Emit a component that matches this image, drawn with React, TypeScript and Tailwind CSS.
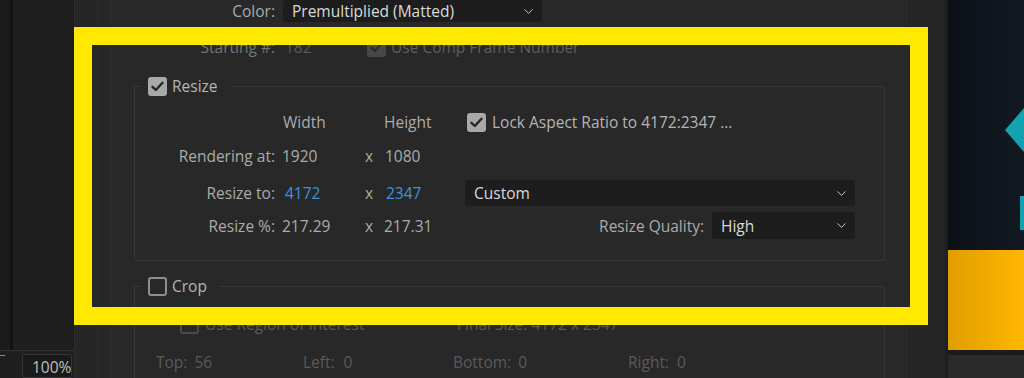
import { ChevronDown } from "lucide-react";

const FONT = { fontFamily: '"Open Sans", "Noto Sans", sans-serif' };

function Check({ on = false, dim = false }: { on?: boolean; dim?: boolean }) {
  if (!on) {
    return (
      <span
        className={`block size-[19px] shrink-0 rounded-[3px] border-2 ${dim ? "border-[#4a4a4a]" : "border-[#8e8e8e]"}`}
      />
    );
  }
  return (
    <span
      className={`flex size-[19px] shrink-0 items-center justify-center rounded-[3px] ${dim ? "bg-[#474747]" : "bg-[#a8a8a8]"}`}
    >
      <svg width="13" height="11" viewBox="0 0 13 11" fill="none">
        <path
          d="M1.5 5.8 4.8 9 11.5 1.8"
          stroke={dim ? "#2c2c2c" : "#262626"}
          strokeWidth="2.4"
          strokeLinecap="round"
          strokeLinejoin="round"
        />
      </svg>
    </span>
  );
}

function Select({ value, className }: { value: string; className: string }) {
  return (
    <div
      className={`flex items-center justify-between rounded-[3px] bg-[#1d1d1d] pl-[9px] pr-[6px] text-[#dadada] ${className}`}
    >
      <span>{value}</span>
      <ChevronDown size={15} strokeWidth={1.6} className="text-[#c4c4c4]" />
    </div>
  );
}

export default function App() {
  return (
    <div
      className="relative flex h-[378px] w-[1024px] overflow-hidden bg-[#262626] text-[15.5px] leading-5 text-[#ababab]"
      style={FONT}
    >
      {/* app side panel */}
      <div className="flex w-[74px] shrink-0 flex-col bg-[#1f1f1f]">
        <div className="flex h-[357px]">
          <div className="w-[10px] bg-[#1b1b1b]" />
          <div className="w-[3px] bg-[#131313]" />
          <div className="flex-1 border-r border-[#181818]" />
        </div>
        <div className="h-px bg-[#333]" />
        <div className="flex flex-1 items-start">
          <div className="mt-[4px] h-px w-[5px] bg-[#8a8a8a]" />
          <div className="ml-[17px] mt-[3px] w-[50px] rounded-[2px] border border-[#353535] bg-[#1a1a1a] pl-[9px] pt-[2px] text-[#bfbfbf]">
            100%
          </div>
        </div>
      </div>

      {/* export dialog */}
      <div className="flex w-[854px] shrink-0 bg-[#262626]">
        <div className="w-[23px] border-l border-[#2e2e2e]" />
        <div className="w-[13px] border-l border-[#2d2d2d] bg-[#272727]" />
        <div className="w-[797px] border-x border-[#2d2d2d] bg-[#282828]">
          <div className="flex h-[22px] items-center">
            <span className="ml-[24px] w-[140px] text-right">Color:</span>
            <Select value="Premultiplied (Matted)" className="ml-[8px] h-[22px] w-[259px]" />
          </div>

          <div className="mt-[14px] flex h-[22px] items-center text-[#767676]">
            <span className="ml-[24px] w-[140px] text-right">Starting #:</span>
            <span className="w-[92px] pl-[10px] text-[#595959]">182</span>
            <Check on dim />
            <span className="ml-[5px] text-[#5e5e5e]">Use Comp Frame Number</span>
          </div>

          {/* Resize */}
          <fieldset className="ml-[23px] mt-[18px] w-[751px] border border-[#353535] pb-[21px]">
            <legend className="ml-[6px] flex items-center pl-[7px] pr-[12px]">
              <Check on />
              <span className="ml-[5px] text-[#b5b5b5]">Resize</span>
            </legend>

            <div className="mt-[16px] flex h-[20px] items-center">
              <span className="w-[140px]" />
              <span className="w-[90px] pl-[8px]">Width</span>
              <span className="w-[19px]" />
              <span className="w-[81px]">Height</span>
              <span className="flex items-center pl-[2px]">
                <Check on />
                <span className="ml-[6px] text-[#b5b5b5]">Lock Aspect Ratio to 4172:2347 ...</span>
              </span>
            </div>

            <div className="mt-[14px] flex h-[20px] items-center">
              <span className="w-[140px] text-right">Rendering at:</span>
              <span className="w-[90px] pl-[7px]">1920</span>
              <span className="w-[19px]">x</span>
              <span className="w-[81px] pl-px">1080</span>
            </div>

            <div className="mt-[14px] flex h-[26px] items-center">
              <span className="w-[140px] text-right">Resize to:</span>
              <span className="w-[90px] pl-[10px] text-[#3d93de]">4172</span>
              <span className="w-[19px]">x</span>
              <span className="w-[81px] pl-[2px] text-[#3d93de]">2347</span>
              <Select value="Custom" className="h-[26px] w-[390px]" />
            </div>

            <div className="mt-[6px] flex h-[27px] items-center">
              <span className="w-[140px] text-right">Resize %:</span>
              <span className="w-[90px] pl-[7px]">217.29</span>
              <span className="w-[19px]">x</span>
              <span className="w-[81px]">217.31</span>
              <span className="flex w-[390px] items-center justify-end gap-[8px]">
                <span>Resize Quality:</span>
                <Select value="High" className="h-[27px] w-[143px]" />
              </span>
            </div>
          </fieldset>

          {/* Crop */}
          <fieldset className="ml-[23px] mt-[15px] w-[751px] border border-[#353535] pb-[10px]">
            <legend className="ml-[6px] flex items-center pl-[7px] pr-[12px]">
              <Check />
              <span className="ml-[5px] text-[#b5b5b5]">Crop</span>
            </legend>

            <div className="mt-[18px] flex h-[20px] items-center text-[#5a5a5a]">
              <span className="ml-[45px]">
                <Check dim />
              </span>
              <span className="ml-[6px] w-[252px]">Use Region of Interest</span>
              <span>Final Size: 4172 x 2347</span>
            </div>

            <div className="mt-[18px] flex h-[20px] items-center text-[#5a5a5a]">
              <span className="ml-[21px] w-[147px]">
                Top:<span className="ml-[7px]">56</span>
              </span>
              <span className="w-[150px]">
                Left:<span className="ml-[9px]">0</span>
              </span>
              <span className="w-[175px]">
                Bottom:<span className="ml-[7px]">0</span>
              </span>
              <span>
                Right:<span className="ml-[8px]">0</span>
              </span>
            </div>
          </fieldset>
        </div>
        <div className="flex-1 bg-[#262626]" />
      </div>

      {/* gap to program monitor */}
      <div className="w-[20px] shrink-0 border-r-[3px] border-[#1e1e1e] bg-[#252525]" />

      {/* program monitor preview */}
      <div className="flex w-[76px] shrink-0 flex-col">
        <div className="h-[250px] bg-gradient-to-r from-[#0c1017] to-[#131922]">
          <svg width="76" height="250" viewBox="0 0 76 250">
            <polygon points="57,130 76,108 76,152" fill="#12a3b3" />
            <rect x="72" y="196" width="4" height="34" fill="#12a3b3" />
          </svg>
        </div>
        <div className="h-[100px] bg-gradient-to-r from-[#e09e00] to-[#ffb700]" />
        <div className="h-[5px] bg-[#1b1b1b]" />
        <div className="flex-1 bg-[#2a2a2a]" />
      </div>

      {/* highlight annotation laid over the dialog */}
      <div className="pointer-events-none absolute left-[74px] top-[27px] h-[298px] w-[854px] border-[18px] border-[#ffe900]" />
    </div>
  );
}
